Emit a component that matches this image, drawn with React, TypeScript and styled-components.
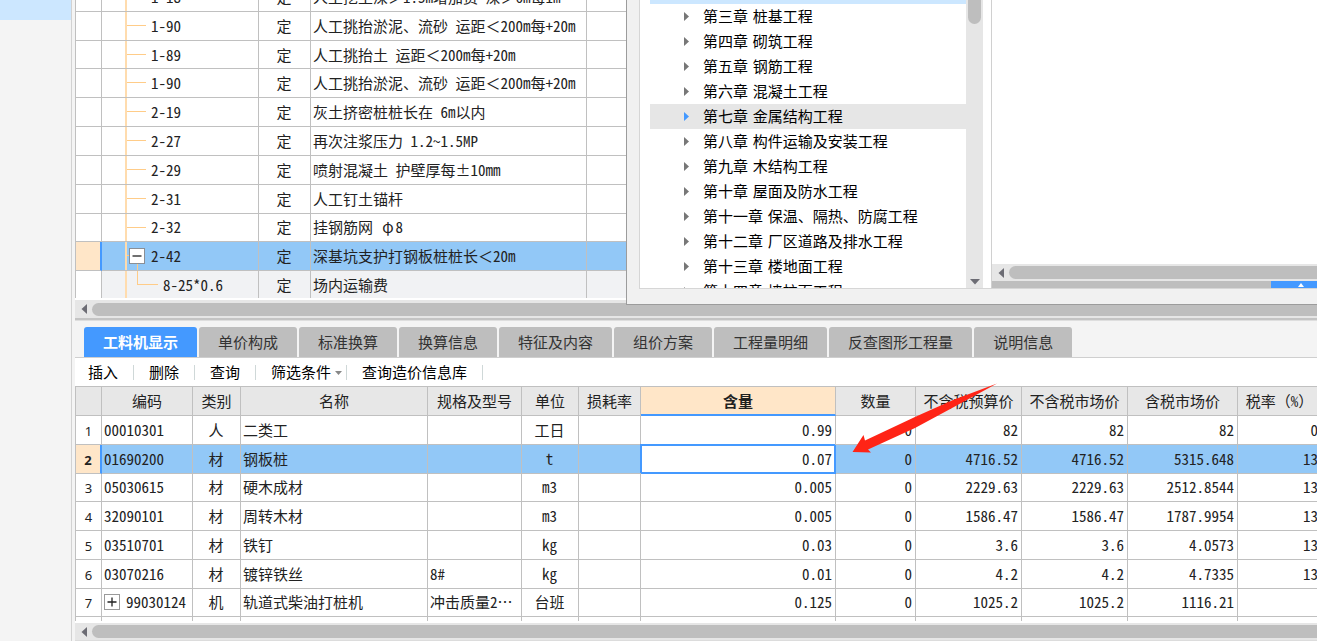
import React from "react";
import styled, { createGlobalStyle, css } from "styled-components";

const color = {
  line: "#c0c0c0",
  chrome: "#f4f4f4",
  track: "#e6e6e6",
  thumb: "#bebebe",
  header: "#e7e7e7",
  select: "#92c8f7",
  accent: "#4499ff",
  peach: "#ffe6c8",
  guide: "#ffcc88",
  trunk: "#ffdcae",
  text: "#222222",
};

const uiFont = `"DejaVu Sans", "Noto Sans CJK SC", sans-serif`;
const gridFont = `"Noto Sans CJK SC", sans-serif`;

const GlobalStyle = createGlobalStyle`
  * { box-sizing: border-box; }
  body { margin: 0; background: ${color.chrome}; }
  button, input { font: inherit; color: inherit; border: 0; padding: 0; margin: 0; background: none; }
`;

const Shell = styled.div`
  position: relative;
  display: flex;
  height: 100vh;
  overflow: hidden;
  background: ${color.chrome};
  color: ${color.text};
  font: 15px/20px ${uiFont};
`;

const Sidebar = styled.aside`
  flex: 0 0 72px;
  border-right: 1px solid #d2d2d2;
  margin-right: 3px;
`;

const SidebarItem = styled.div`
  height: 20px;
  background: #cce7ff;
`;

const Workspace = styled.main`
  flex: 1;
  min-width: 0;
  display: flex;
  flex-direction: column;
`;

const Pane = styled.div`
  overflow: hidden;
  border-left: 1px solid ${color.line};
  background: #fff;
`;

const UpperPane = styled(Pane)`
  flex: 0 0 298px;
`;

const LowerPane = styled(Pane)`
  flex: 1;
  min-height: 0;
  border-top: 1px solid ${color.line};
`;

const Grid = styled.table<{ $height: number; $width: string; $scrolled?: number }>`
  table-layout: fixed;
  border-collapse: separate;
  border-spacing: 0;
  width: ${(p) => p.$width};
  height: ${(p) => p.$height}px;
  margin-top: ${(p) => -(p.$scrolled ?? 0)}px;
  font-family: ${gridFont};
  font-feature-settings: "hwid";
`;

const Wide = styled.span`
  display: inline-block;
  width: 1em;
  text-align: center;
  font-feature-settings: "fwid";
`;

const Row = styled.tr<{ $tone?: "selected" | "child" }>`
  background: ${(p) => (p.$tone === "selected" ? color.select : p.$tone === "child" ? "#f1f2f4" : "#fff")};
`;

type Align = "left" | "center" | "right";

const Cell = styled.td<{ $align?: Align }>`
  height: 28px;
  padding: 0 3px 0 2px;
  border-right: 1px solid ${color.line};
  border-bottom: 1px solid ${color.line};
  text-align: ${(p) => p.$align ?? "left"};
  white-space: nowrap;
  overflow: hidden;
`;

const HeadCell = styled.th<{ $current?: boolean }>`
  height: 29px;
  padding: 0;
  border-right: 1px solid ${color.line};
  border-bottom: 1px solid ${color.line};
  background: ${color.header};
  font-weight: 400;
  white-space: nowrap;
  ${(p) =>
    p.$current &&
    css`
      background: ${color.peach};
      border-bottom: 2px solid ${color.accent};
      font-weight: 700;
    `}
`;

const RowHead = styled.th<{ $current?: boolean }>`
  padding: 2px 0 0;
  border-right: 1px solid ${color.line};
  border-bottom: 1px solid ${color.line};
  background: #fff;
  font: 400 13px/20px "Noto Sans", sans-serif;
  ${(p) =>
    p.$current &&
    css`
      background: ${color.peach};
      border-right: 2px solid ${color.accent};
      font-weight: 700;
    `}
`;

const EditCell = styled(Cell)`
  overflow: visible;
  background: #fff;
  border-color: ${color.accent};
  box-shadow: -1px -1px 0 ${color.accent}, inset 0 0 0 1px ${color.accent};
`;

const EditInput = styled.input`
  display: block;
  width: 100%;
  height: 20px;
  text-align: right;
  outline: 0;
  font-feature-settings: "hwid";
`;

const line = `linear-gradient(${color.guide}, ${color.guide})`;
const trunk = `linear-gradient(${color.trunk}, ${color.trunk}) 23px 0 / 2px 100% no-repeat`;
const guides = {
  leaf: `${trunk}, ${line} 25px 13px / 19px 1px no-repeat`,
  parent: `${trunk}, ${line} 25px 13px / 3px 1px no-repeat, ${line} 35px 21px / 1px 8px no-repeat`,
  child: `${trunk}, ${line} 35px 0 / 1px 13px no-repeat, ${line} 35px 13px / 21px 1px no-repeat`,
};

const CodeCell = styled(Cell)<{ $kind: keyof typeof guides }>`
  background: ${(p) => guides[p.$kind]};
  padding-left: ${(p) => (p.$kind === "leaf" ? 49 : p.$kind === "parent" ? 27 : 61)}px;
`;

const CodeBox = styled.div`
  display: flex;
  align-items: center;
  gap: 6px;
`;

const Toggle = styled.button<{ $heavy?: boolean }>`
  display: flex;
  align-items: center;
  justify-content: center;
  width: 16px;
  height: 16px;
  background: #fff;
  border: 1px solid ${(p) => (p.$heavy ? "#8a8f96" : "#9a9a9a")};
`;

const ToggleIcon = ({ open }: { open?: boolean }) => (
  <svg width="10" height="10" viewBox="0 0 10 10" stroke="#222" strokeWidth="1.3">
    <path d={open ? "M0.5 5H9.5" : "M0.5 5H9.5M5 0.5V9.5"} />
  </svg>
);

const HScroll = styled.div<{ $size: number }>`
  flex: none;
  display: flex;
  align-items: center;
  gap: 5px;
  height: ${(p) => p.$size}px;
  padding-left: 5px;
  background: ${color.track};
`;

const LowerScroll = styled(HScroll)`
  border-bottom: 1px solid #dcdcdc;
`;

const Thumb = styled.div`
  flex: 1;
  height: 13px;
  border-radius: 7px 0 0 7px;
  background: ${color.thumb};
`;

const ArrowButton = styled.button`
  display: flex;
  align-items: center;
  justify-content: center;
  width: 7px;
  height: 12px;
`;

const LeftArrow = () => (
  <ArrowButton aria-label="向左滚动">
    <svg width="6" height="10" viewBox="0 0 6 10">
      <path d="M6 0V10L0.500 5Z" fill="#6c6c74" />
    </svg>
  </ArrowButton>
);

const Splitter = styled.div`
  flex: none;
  height: 3px;
  margin-bottom: 6px;
  background: #c4c4c4;
  border-bottom: 1px solid #dedede;
`;

const Gap = styled.div`
  flex: none;
  height: 2px;
  background: #fff;
`;

const Tabs = styled.div`
  flex: none;
  display: flex;
  gap: 2px;
  padding-left: 9px;
  border-bottom: 1px solid #cfcfcf;
`;

const Tab = styled.button<{ $active?: boolean }>`
  height: 30px;
  padding: 2px 19px 0;
  border-radius: 3px 3px 0 0;
  background: ${(p) => (p.$active ? color.accent : "#bebebe")};
  color: ${(p) => (p.$active ? "#fff" : "#333")};
  font-weight: ${(p) => (p.$active ? 700 : 400)};
  white-space: nowrap;
`;

const Toolbar = styled.div`
  flex: none;
  display: flex;
  align-items: center;
  height: 28px;
  padding-top: 1px;
  background: #fff;
  color: #000;
`;

const Tool = styled.button<{ $menu?: boolean }>`
  display: flex;
  align-items: center;
  gap: 4px;
  padding: 0 ${(p) => (p.$menu ? 4 : 15)}px 0 15px;
  white-space: nowrap;

  &:first-child {
    padding-left: 13px;
  }
`;

const Separator = styled.span`
  width: 1px;
  height: 15px;
  background: #cfd8d8;
`;

const Dialog = styled.section`
  position: absolute;
  top: 0;
  left: 626px;
  right: 0;
  height: 305px;
  display: flex;
  padding: 0 0 15px 12px;
  background: #f1f1f1;
  border-left: 1px solid #9c9c9c;
  border-bottom: 1px solid #9c9c9c;
`;

const TreePane = styled.div`
  flex: 0 0 352px;
  display: flex;
  border-left: 1px solid #d6d6d6;
  border-bottom: 1px solid #d6d6d6;
  padding: 0 8px 0 10px;
  overflow: hidden;
  background: #fff;
`;

const Tree = styled.ul`
  flex: 1;
  margin: 0;
  padding: 0;
  list-style: none;
  color: #000;
`;

const TreeEdge = styled.li`
  height: 4px;
  background: #cce7ff;
`;

const TreeItem = styled.li<{ $hover?: boolean }>`
  display: flex;
  align-items: center;
  gap: 14px;
  height: 25px;
  padding-left: 34px;
  white-space: nowrap;
  background: ${(p) => (p.$hover ? "#e6e6e6" : "transparent")};
`;

const VScroll = styled.div`
  flex: 0 0 17px;
  display: flex;
  flex-direction: column;
  align-items: center;
  justify-content: space-between;
  padding-bottom: 3px;
  background: ${color.track};
`;

const VThumb = styled.div`
  width: 13px;
  height: 24px;
  border-radius: 0 0 7px 7px;
  background: ${color.thumb};
`;

const DetailPane = styled.div`
  flex: 1;
  min-width: 0;
  display: flex;
  flex-direction: column;
  border-left: 1px solid #d0d0d0;
  border-bottom: 1px solid #d6d6d6;
`;

const DetailBody = styled.div`
  flex: 1;
  background: #fff;
`;

const Footer = styled.div`
  flex: none;
  display: flex;
  height: 7px;
  background: ${color.thumb};
  justify-content: flex-end;
`;

const Expand = styled.button`
  display: flex;
  justify-content: center;
  align-items: center;
  width: 46px;
  padding-left: 14px;
  background: ${color.accent};
`;

const Pointer = styled.svg`
  position: absolute;
  left: 852px;
  top: 383px;
  pointer-events: none;
`;

const quotas: { code: string; name: string; kind: keyof typeof guides }[] = [
  { code: "1-18", name: "人工挖土深＞1.5m增加费 深＞6m每1m", kind: "leaf" },
  { code: "1-90", name: "人工挑抬淤泥、流砂 运距＜200m每+20m", kind: "leaf" },
  { code: "1-89", name: "人工挑抬土 运距＜200m每+20m", kind: "leaf" },
  { code: "1-90", name: "人工挑抬淤泥、流砂 运距＜200m每+20m", kind: "leaf" },
  { code: "2-19", name: "灰土挤密桩桩长在 6m以内", kind: "leaf" },
  { code: "2-27", name: "再次注浆压力 1.2~1.5MP", kind: "leaf" },
  { code: "2-29", name: "喷射混凝土 护壁厚每±10mm", kind: "leaf" },
  { code: "2-31", name: "人工钉土锚杆", kind: "leaf" },
  { code: "2-32", name: "挂钢筋网 φ8", kind: "leaf" },
  { code: "2-42", name: "深基坑支护打钢板桩桩长＜20m", kind: "parent" },
  { code: "8-25*0.6", name: "场内运输费", kind: "child" },
];

const chapters = [
  "第三章 桩基工程",
  "第四章 砌筑工程",
  "第五章 钢筋工程",
  "第六章 混凝土工程",
  "第七章 金属结构工程",
  "第八章 构件运输及安装工程",
  "第九章 木结构工程",
  "第十章 屋面及防水工程",
  "第十一章 保温、隔热、防腐工程",
  "第十二章 厂区道路及排水工程",
  "第十三章 楼地面工程",
  "第十四章 墙柱面工程",
];

const tabs = ["工料机显示", "单价构成", "标准换算", "换算信息", "特征及内容", "组价方案", "工程量明细", "反查图形工程量", "说明信息"];
const tools = ["插入", "删除", "查询", "筛选条件", "查询造价信息库"];

const columns: { title: string; width: number; align: Align }[] = [
  { title: "编码", width: 91, align: "left" },
  { title: "类别", width: 48, align: "center" },
  { title: "名称", width: 187, align: "left" },
  { title: "规格及型号", width: 94, align: "left" },
  { title: "单位", width: 57, align: "center" },
  { title: "损耗率", width: 62, align: "left" },
  { title: "含量", width: 195, align: "right" },
  { title: "数量", width: 80, align: "right" },
  { title: "不含税预算价", width: 106, align: "right" },
  { title: "不含税市场价", width: 106, align: "right" },
  { title: "含税市场价", width: 110, align: "right" },
  { title: "税率（%）", width: 84, align: "right" },
];

const materials = [
  ["00010301", "人", "二类工", "", "工日", "", "0.99", "0", "82", "82", "82", "0"],
  ["01690200", "材", "钢板桩", "", "t", "", "0.07", "0", "4716.52", "4716.52", "5315.648", "13"],
  ["05030615", "材", "硬木成材", "", "m3", "", "0.005", "0", "2229.63", "2229.63", "2512.8544", "13"],
  ["32090101", "材", "周转木材", "", "m3", "", "0.005", "0", "1586.47", "1586.47", "1787.9954", "13"],
  ["03510701", "材", "铁钉", "", "kg", "", "0.03", "0", "3.6", "3.6", "4.0573", "13"],
  ["03070216", "材", "镀锌铁丝", "8#", "kg", "", "0.01", "0", "4.2", "4.2", "4.7335", "13"],
  ["99030124", "机", "轨道式柴油打桩机", "冲击质量2…", "台班", "", "0.125", "0", "1025.2", "1025.2", "1116.21", ""],
];

const SELECTED = 1;
const EDITED = 6;

// Latin text in the grids is half width; these signs keep the full em.
const GridText = ({ children }: { children: string }) => (
  <>
    {children.split(/([＜＞（）φ])/).map((part, i) => (i % 2 ? <Wide key={i}>{part}</Wide> : part))}
  </>
);

function QuotaTable() {
  return (
    <Grid $width="100%" $height={317} $scrolled={17}>
      <colgroup>
        <col width={26} />
        <col width={157} />
        <col width={52} />
        <col width={276} />
        <col />
      </colgroup>
      <tbody>
        {quotas.map((q, i) => (
          <Row key={i} $tone={q.kind === "parent" ? "selected" : q.kind === "child" ? "child" : undefined}>
            <RowHead $current={q.kind === "parent"} />
            <CodeCell $kind={q.kind}>
              {q.kind === "parent" ? (
                <CodeBox>
                  <Toggle $heavy aria-label="折叠">
                    <ToggleIcon open />
                  </Toggle>
                  {q.code}
                </CodeBox>
              ) : (
                q.code
              )}
            </CodeCell>
            <Cell $align="center">定</Cell>
            <Cell>
              <GridText>{q.name}</GridText>
            </Cell>
            <Cell />
          </Row>
        ))}
      </tbody>
    </Grid>
  );
}

function MaterialTable() {
  return (
    <Grid $width="1246px" $height={259}>
      <colgroup>
        <col width={26} />
        {columns.map((c) => (
          <col key={c.title} width={c.width} />
        ))}
      </colgroup>
      <thead>
        <tr>
          <HeadCell />
          {columns.map((c, i) => (
            <HeadCell key={c.title} $current={i === EDITED}>
              <GridText>{c.title}</GridText>
            </HeadCell>
          ))}
        </tr>
      </thead>
      <tbody>
        {materials.map((m, r) => (
          <Row key={m[0]} $tone={r === SELECTED ? "selected" : undefined}>
            <RowHead $current={r === SELECTED}>{r + 1}</RowHead>
            {m.map((value, c) =>
              r === SELECTED && c === EDITED ? (
                <EditCell key={c}>
                  <EditInput aria-label="含量" defaultValue={value} />
                </EditCell>
              ) : (
                <Cell key={c} $align={columns[c].align}>
                  {c === 0 && r === materials.length - 1 ? (
                    <CodeBox>
                      <Toggle aria-label="展开">
                        <ToggleIcon />
                      </Toggle>
                      {value}
                    </CodeBox>
                  ) : (
                    value
                  )}
                </Cell>
              )
            )}
          </Row>
        ))}
        <Row>
          <RowHead />
          {columns.map((c) => (
            <Cell key={c.title} />
          ))}
        </Row>
      </tbody>
    </Grid>
  );
}

function ChapterDialog() {
  return (
    <Dialog>
      <TreePane>
        <Tree>
          <TreeEdge />
          {chapters.map((c, i) => (
            <TreeItem key={c} $hover={i === 4}>
              <svg width="5" height="9" viewBox="0 0 5 9">
                <path d="M0 0L5 4.500L0 9Z" fill={i === 4 ? color.accent : "#777"} />
              </svg>
              {c}
            </TreeItem>
          ))}
        </Tree>
        <VScroll>
          <VThumb />
          <svg width="10" height="6" viewBox="0 0 10 6">
            <path d="M0 0H10L5 5.500Z" fill="#6c6c74" />
          </svg>
        </VScroll>
      </TreePane>
      <DetailPane>
        <DetailBody />
        <HScroll $size={17}>
          <LeftArrow />
          <Thumb />
        </HScroll>
        <Footer>
          <Expand aria-label="展开面板">
            <svg width="6" height="4" viewBox="0 0 6 4">
              <path d="M0 4L3 0L6 4Z" fill="#fff" />
            </svg>
          </Expand>
        </Footer>
      </DetailPane>
    </Dialog>
  );
}

export default function App() {
  return (
    <Shell>
      <GlobalStyle />
      <Sidebar>
        <SidebarItem />
      </Sidebar>
      <Workspace>
        <UpperPane>
          <QuotaTable />
        </UpperPane>
        <Gap />
        <HScroll $size={18}>
          <LeftArrow />
          <Thumb />
        </HScroll>
        <Splitter />
        <Tabs role="tablist">
          {tabs.map((t, i) => (
            <Tab key={t} role="tab" aria-selected={i === 0} $active={i === 0}>
              {t}
            </Tab>
          ))}
        </Tabs>
        <Toolbar>
          {tools.map((t) => (
            <React.Fragment key={t}>
              <Tool $menu={t === "筛选条件"}>
                {t}
                {t === "筛选条件" && (
                  <svg width="7" height="4" viewBox="0 0 7 4">
                    <path d="M0 0H7L3.500 4Z" fill="#888" />
                  </svg>
                )}
              </Tool>
              <Separator />
            </React.Fragment>
          ))}
        </Toolbar>
        <LowerPane>
          <MaterialTable />
        </LowerPane>
        <Gap />
        <LowerScroll $size={18}>
          <LeftArrow />
          <Thumb />
        </LowerScroll>
      </Workspace>
      <ChapterDialog />
      <Pointer width="146" height="71" viewBox="0 0 146 71" aria-hidden="true">
        <path
          d="M145 0.500L101 17L64 33.500L13 57.500L11.500 52L0.500 69L19 69.500L16 66.500L63 45L101 24.500Z"
          fill="#ff2416"
        />
      </Pointer>
    </Shell>
  );
}
